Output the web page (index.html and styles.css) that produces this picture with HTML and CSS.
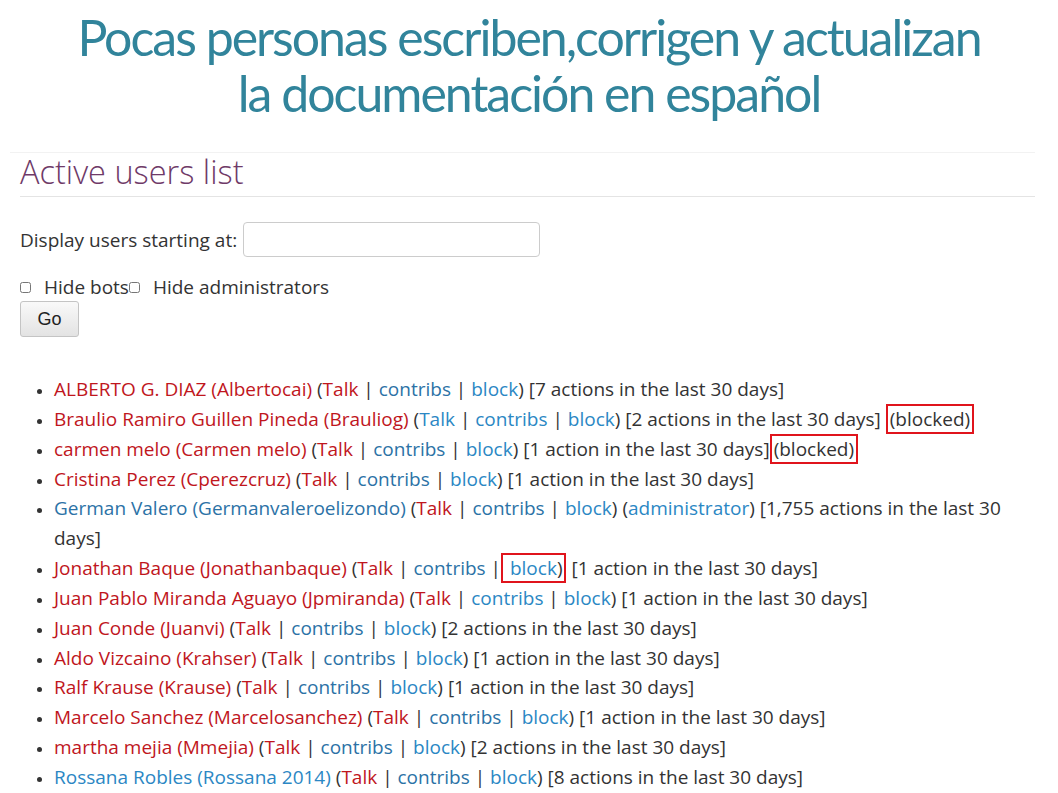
FILE: index.html
```html
<!DOCTYPE html>
<html lang="es">
<head>
    <meta charset="UTF-8">
    <title>Active users list</title>
    <link rel="stylesheet" href="styles.css">
</head>
<body>
    <header class="slide-title">
        <h1><span class="line">Pocas personas escriben,corrigen y actualizan</span><span class="line">la documentación en español</span></h1>
    </header>
    <main class="shot">
        <h2 class="page-heading">Active users list</h2>
        <form class="filter">
            <div class="start-row">
                <label for="offset">Display users starting at:</label>
                <input id="offset" type="text">
            </div>
            <div class="checks">
                <input type="checkbox" id="hidebots"><label for="hidebots">Hide bots</label><input type="checkbox" id="hidesysops"><label for="hidesysops">Hide administrators</label>
            </div>
            <button type="button" class="go">Go</button>
        </form>
        <ul class="users">
            <li><a class="new" href="#">ALBERTO G. DIAZ (Albertocai)</a> (<a class="new" href="#">Talk</a> | <a class="tool" href="#">contribs</a> | <a href="#">block</a>) [7 actions in the last 30 days]</li>
            <li><a class="new" href="#">Braulio Ramiro Guillen Pineda (Brauliog)</a> (<a href="#">Talk</a> | <a href="#">contribs</a> | <a href="#">block</a>) [2 actions in the last 30 days] <span class="mark">(blocked)</span></li>
            <li><a class="new" href="#">carmen melo (Carmen melo)</a> (<a class="new" href="#">Talk</a> | <a class="tool" href="#">contribs</a> | <a href="#">block</a>) [1 action in the last 30 days]<span class="mark">(blocked)</span></li>
            <li><a class="new" href="#">Cristina Perez (Cperezcruz)</a> (<a class="new" href="#">Talk</a> | <a class="tool" href="#">contribs</a> | <a href="#">block</a>) [1 action in the last 30 days]</li>
            <li><a class="tool" href="#">German Valero (Germanvaleroelizondo)</a> (<a class="new" href="#">Talk</a> | <a class="tool" href="#">contribs</a> | <a href="#">block</a>) (<a href="#">administrator</a>) [1,755 actions in the last 30 days]</li>
            <li><a class="new" href="#">Jonathan Baque (Jonathanbaque)</a> (<a class="new" href="#">Talk</a> | <a class="tool" href="#">contribs</a> |<span class="mark"> <a href="#">block</a>)</span> [1 action in the last 30 days]</li>
            <li><a class="new" href="#">Juan Pablo Miranda Aguayo (Jpmiranda)</a> (<a class="new" href="#">Talk</a> | <a href="#">contribs</a> | <a href="#">block</a>) [1 action in the last 30 days]</li>
            <li><a class="new" href="#">Juan Conde (Juanvi)</a> (<a class="new" href="#">Talk</a> | <a class="tool" href="#">contribs</a> | <a href="#">block</a>) [2 actions in the last 30 days]</li>
            <li><a class="new" href="#">Aldo Vizcaino (Krahser)</a> (<a class="new" href="#">Talk</a> | <a class="tool" href="#">contribs</a> | <a href="#">block</a>) [1 action in the last 30 days]</li>
            <li><a class="new" href="#">Ralf Krause (Krause)</a> (<a class="new" href="#">Talk</a> | <a class="tool" href="#">contribs</a> | <a href="#">block</a>) [1 action in the last 30 days]</li>
            <li><a class="new" href="#">Marcelo Sanchez (Marcelosanchez)</a> (<a class="new" href="#">Talk</a> | <a class="tool" href="#">contribs</a> | <a href="#">block</a>) [1 action in the last 30 days]</li>
            <li><a class="new" href="#">martha mejia (Mmejia)</a> (<a class="new" href="#">Talk</a> | <a class="tool" href="#">contribs</a> | <a href="#">block</a>) [2 actions in the last 30 days]</li>
            <li><a href="#">Rossana Robles (Rossana 2014)</a> (<a class="new" href="#">Talk</a> | <a class="tool" href="#">contribs</a> | <a href="#">block</a>) [8 actions in the last 30 days]</li>
        </ul>
    </main>
</body>
</html>
```

FILE: styles.css
```css
body {
    margin: 0;
    padding: 0;
    background-color: #ffffff;
    color: #333333;
    font-family: "Open Sans", sans-serif;
}

.slide-title {
    height: 152px;
    text-align: center;
}

.slide-title h1 {
    margin: 0;
    padding-top: 9px;
    font-family: Lato, "Open Sans", sans-serif;
    font-weight: normal;
    font-size: 50px;
    letter-spacing: -2px;
    line-height: 56px;
    color: #31849b;
}

.slide-title .line {
    display: block;
}

.shot {
    margin: 0 23px 0 10px;
    padding-left: 10px;
    border-top: 1px solid #f2f2f2;
}

.page-heading {
    margin: 0;
    padding: 1px 0 6px 0;
    font-size: 32.5px;
    font-weight: 300;
    line-height: 36px;
    color: #6f3a68;
    border-bottom: 1px solid #e4e4e4;
}

.filter {
    font-size: 19px;
    padding-top: 25px;
}

.start-row {
    display: flex;
    align-items: center;
    gap: 6px;
}

.start-row input {
    width: 297px;
    height: 35px;
    box-sizing: border-box;
    border: 1px solid #cccccc;
    border-radius: 4px;
}

.checks {
    display: flex;
    align-items: center;
    margin-top: 18px;
    height: 24px;
}

.checks input {
    width: 11px;
    height: 11px;
    margin: 0 13px 0 0;
}

.go {
    margin-top: 2px;
    width: 59px;
    height: 36px;
    font-family: "Liberation Sans", Arial, sans-serif;
    font-size: 18px;
    color: #222222;
    border: 1px solid #c4c4c4;
    border-radius: 3px;
    background: linear-gradient(#f9f9f9, #e3e3e3);
}

.users {
    margin: 38px 0 0 0;
    padding-left: 34px;
    font-size: 19px;
    line-height: 29.85px;
}

.users li::marker {
    font-size: 15px;
}

.users a {
    color: #2b87c4;
    text-decoration: none;
}

.users a.tool {
    color: #2c72a6;
}

.users a.new {
    color: #c0161d;
}

.mark {
    border: 2px solid #e0141c;
    padding: 0 2px;
}
```
